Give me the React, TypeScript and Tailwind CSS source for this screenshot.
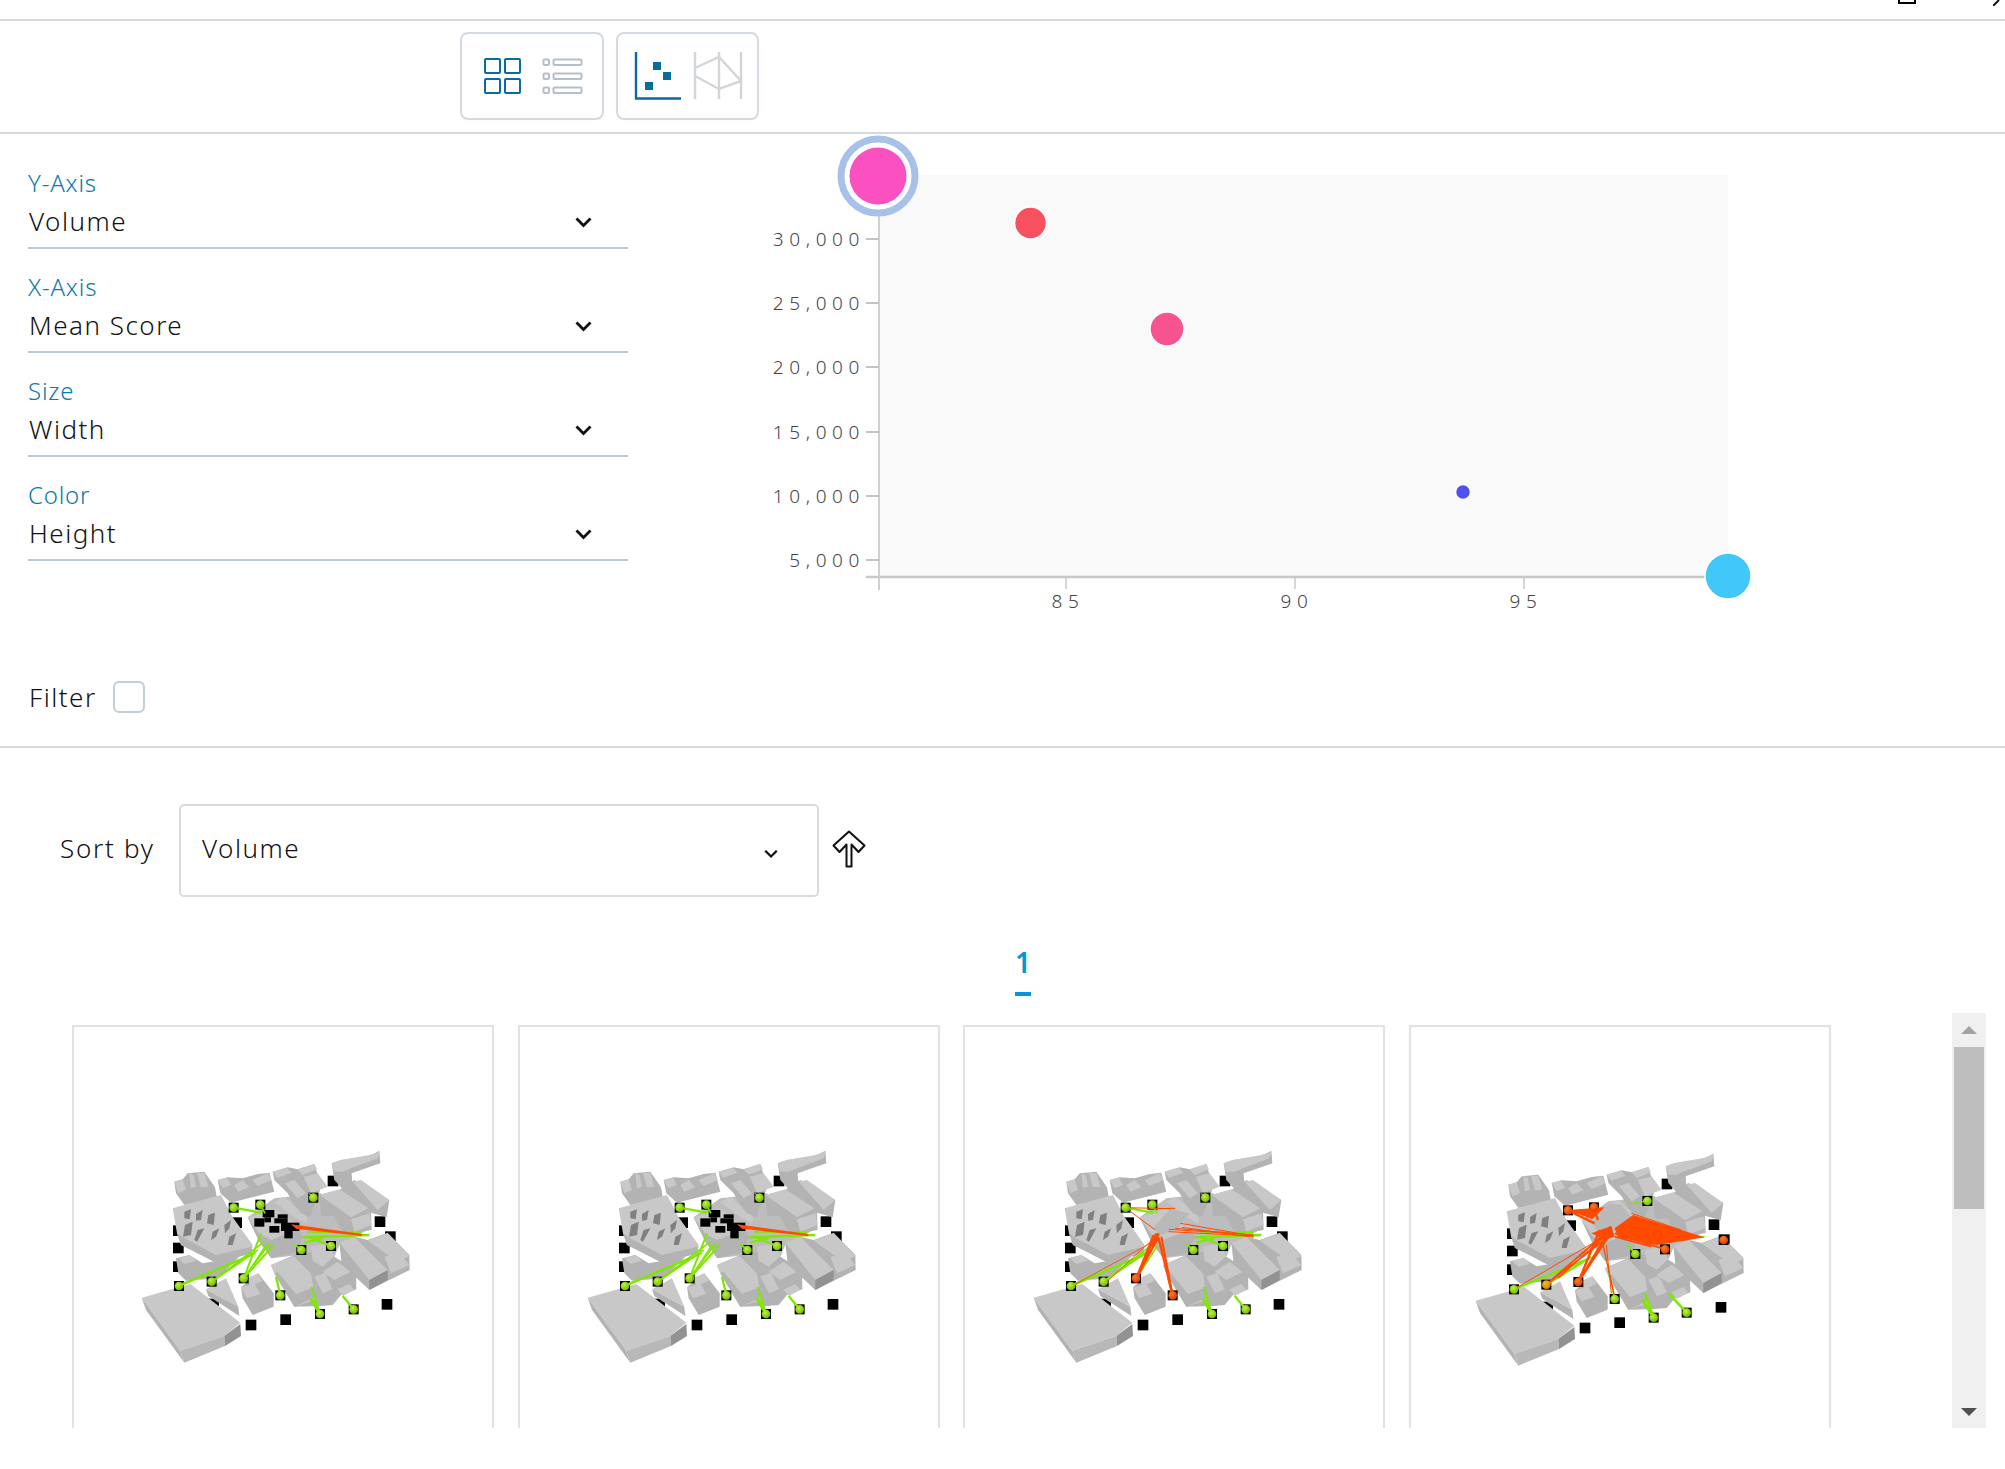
const Chevron = ({ small = false }: { small?: boolean }) => (
  <svg width={small ? 14 : 17} height={small ? 10 : 11} viewBox="0 0 17 11" fill="none">
    <path d="M1.5 1.5L8.5 8.5L15.5 1.5" stroke="#111" strokeWidth="2.8" />
  </svg>
);

const fields = [
  { label: "Y-Axis", value: "Volume" },
  { label: "X-Axis", value: "Mean Score" },
  { label: "Size", value: "Width" },
  { label: "Color", value: "Height" },
];

const Field = ({ label, value }: { label: string; value: string }) => (
  <div className="mb-[19px] w-[600px]">
    <div className="text-[24px] leading-[38px] tracking-[0.8px] font-light text-[#0f7aa6]">{label}</div>
    <div className="flex items-center justify-between border-b-2 border-[#bcc8d3] pb-[7px] pr-[36px] pl-[1px]">
      <span className="text-[26px] leading-[38px] tracking-[1.5px] font-light text-[#111]">{value}</span>
      <div className="pt-[3px]">
        <Chevron />
      </div>
    </div>
  </div>
);

const ChartChart = () => {
  const yTicks: [string, number][] = [
    ["30,000", 239],
    ["25,000", 303],
    ["20,000", 367],
    ["15,000", 432],
    ["10,000", 496],
    ["5,000", 560],
  ];
  const xTicks: [string, number][] = [
    ["85", 1065],
    ["90", 1294],
    ["95", 1523],
  ];
  return (
    <svg width="1377" height="613" viewBox="627 134 1377 613">
      <rect x="879" y="175" width="848" height="401" fill="#f9f9f9" />
      <line x1="878" y1="176" x2="878" y2="590" stroke="#d0d0d0" strokeWidth="2" />
      <line x1="865" y1="577" x2="1727" y2="577" stroke="#c8c8c8" strokeWidth="2.5" />
      {yTicks.map(([t, y]) => (
        <g key={t}>
          <line x1="865" y1={y} x2="878" y2={y} stroke="#c4c4c4" strokeWidth="2" />
          <text x="864" y={y + 7} textAnchor="end" fontFamily="Noto Sans" fontWeight="300" fontSize="19" letterSpacing="5.6" fill="#444">
            {t}
          </text>
        </g>
      ))}
      {xTicks.map(([t, x]) => (
        <g key={t}>
          <line x1={x} y1="577" x2={x} y2="589" stroke="#c8c8c8" strokeWidth="1.5" />
          <text x={x + 2} y="608" textAnchor="middle" fontFamily="Noto Sans" fontWeight="300" fontSize="19" letterSpacing="5.6" fill="#444">
            {t}
          </text>
        </g>
      ))}
      <circle cx="877" cy="176" r="37" fill="#fff" stroke="#a8c1e8" strokeWidth="7" />
      <circle cx="877" cy="176" r="28.5" fill="#fa50c0" />
      <circle cx="1029.5" cy="223" r="16" fill="#f75160" stroke="#fff" strokeWidth="1.5" />
      <circle cx="1166" cy="329" r="17" fill="#f7538f" stroke="#fff" strokeWidth="1.5" />
      <circle cx="1462" cy="492" r="7.5" fill="#5050ee" stroke="#fff" strokeWidth="1.5" />
      <circle cx="1727" cy="576" r="23" fill="#41c8f8" stroke="#fff" strokeWidth="1.5" />
    </svg>
  );
};

// top faces, then shaded faces, in the 3x crop's coordinates
const TOP = "#c8c8c8";
const SIDE = "#b3b3b3";
const DARK = "#929292";

const buildings: [string, string][] = [
  // underlay so the blocks read as one city
  ["460,205 600,190 740,300 655,345 640,380 560,372 450,385 415,335 380,262", "#bdbdbd"],
  // back row left
  ["160,155 185,148 200,130 250,125 282,172 288,205 190,225 165,190", SIDE],
  ["160,155 185,148 195,180 172,190", TOP],
  ["205,130 218,135 225,170 210,175", TOP],
  ["228,130 250,128 262,170 240,172", TOP],
  ["290,150 320,142 365,145 410,132 445,128 460,185 330,218 298,190", SIDE],
  ["290,150 318,143 330,165 305,175", TOP],
  ["395,150 440,130 452,150 410,168", TOP],
  ["340,165 365,150 385,172 352,185", TOP],
  // back row middle
  ["455,125 500,112 530,118 580,102 590,135 600,165 590,210 560,265 520,225 500,190 460,150", SIDE],
  ["455,125 498,114 512,128 468,143", TOP],
  ["530,118 580,102 588,118 545,135", TOP],
  ["548,140 590,130 620,170 570,190", TOP],
  ["492,160 520,150 555,190 530,205", TOP],
  // top right L
  ["632,100 660,90 745,78 775,62 778,100 692,130 695,180 665,178 640,150", SIDE],
  ["632,100 660,90 745,75 775,65 770,85 690,115 665,125 640,125", TOP],
  // right cluster
  ["595,195 655,180 700,150 805,210 797,262 750,248 752,300 680,312 600,255", SIDE],
  ["595,195 655,178 742,235 690,262", TOP],
  ["695,155 720,150 805,210 770,240", TOP],
  ["690,268 745,250 752,285 700,305", TOP],
  // behind the plaza, right
  ["585,258 640,258 662,305 655,345 600,340 555,345 535,290", "#bdbdbd"],
  // plaza centre
  ["380,262 460,235 530,285 545,320 530,365 452,385 415,335", SIDE],
  ["380,262 460,235 540,295 450,330 415,312", TOP],
  ["460,215 490,200 560,262 555,280 520,262", TOP],
  ["520,225 545,205 575,225 570,260 540,250", SIDE],
  // stadium
  ["155,235 300,195 335,262 395,345 392,370 285,398 225,365 180,345 168,310", TOP],
  ["168,310 180,345 285,398 392,370 392,350 285,375 190,325", SIDE],
  ["165,385 205,375 245,400 355,380 290,445 195,452 172,430", SIDE],
  ["172,385 205,375 225,392 190,402", TOP],
  // lower left plate
  ["62,503 208,462 358,578 310,618 178,662", TOP],
  ["62,503 178,662 190,698 75,540", SIDE],
  ["178,662 310,618 312,648 190,698", "#b8b8b8"],
  ["310,618 358,582 360,618 312,648", DARK],
  // triangle
  ["255,478 315,445 352,530", TOP],
  ["255,478 352,530 355,558 262,498", SIDE],
  // small block
  ["360,472 412,430 458,490 458,530 395,555 365,505", SIDE],
  ["376,445 412,430 425,452 390,468", TOP],
  ["360,472 400,462 418,492 378,505", TOP],
  // middle lower
  ["450,405 520,375 600,360 640,380 705,420 706,478 660,495 635,525 600,528 520,530 460,430", SIDE],
  ["450,405 518,378 570,430 578,480 582,510 520,530 460,430", TOP],
  ["460,430 520,530 585,500 582,470 525,492 470,425", SIDE],
  ["520,375 560,365 600,420 570,430", SIDE],
  ["570,350 620,340 640,378 605,410 575,392", TOP],
  ["605,425 650,395 690,425 640,450", TOP],
  ["580,440 612,428 635,478 606,490", TOP],
  ["650,478 685,462 700,480 665,498", TOP],
  // lower right
  ["655,338 700,320 740,330 800,308 865,375 866,420 805,450 745,480 662,402", SIDE],
  ["655,338 700,320 800,420 745,450", TOP],
  ["740,332 800,310 866,378 830,395", TOP],
  ["790,380 835,370 865,405 810,430", TOP],
  ["745,450 800,420 800,450 745,480", DARK],
];

const windows = [
  "190,245 210,238 206,268 190,265",
  "225,252 245,240 240,270 225,272",
  "262,255 282,248 278,285 258,280",
  "192,285 215,275 210,315 186,320",
  "230,300 250,295 228,335 220,330",
  "275,305 295,295 285,320 270,330",
  "310,285 330,270 325,295 312,310",
  "325,320 345,310 335,345 320,345",
];

const plainSquares: [number, number][] = [
  [798, 523], [494, 569], [390, 585], [278, 522], [777, 275], [592, 248], [636, 153],
  [172, 302], [172, 354], [172, 410], [347, 278], [808, 320],
];

const cluster: [number, number, number, number][] = [
  [400, 265, 30, 25], [425, 240, 35, 22], [460, 265, 40, 15], [480, 278, 55, 25],
  [445, 288, 30, 20], [490, 303, 25, 22], [470, 253, 30, 12], [430, 262, 20, 15],
];

type Sphere = [number, number, "g" | "r" | "o"];
type Edge = [number, number, number, number, number];

const base: Sphere[] = [
  [338, 233, "g"], [418, 224, "g"], [577, 203, "g"], [174, 468, "g"], [272, 455, "g"], [368, 445, "g"],
  [478, 496, "g"], [597, 552, "g"], [698, 538, "g"], [541, 360, "g"], [630, 348, "g"],
];

const greenEdges: Edge[] = [
  [338, 233, 420, 248, 7], [418, 224, 432, 250, 5],
  [174, 468, 390, 375, 7], [180, 462, 405, 370, 4], [272, 455, 395, 370, 6], [272, 455, 430, 335, 5], [290, 440, 410, 360, 5],
  [368, 445, 420, 310, 6], [368, 445, 445, 340, 6], [368, 445, 458, 345, 6], [380, 430, 435, 345, 5],
  [478, 496, 465, 440, 7], [597, 552, 572, 470, 6], [597, 552, 570, 505, 10], [698, 538, 665, 498, 7],
  [541, 360, 520, 342, 6], [630, 348, 560, 320, 7], [745, 315, 545, 322, 7], [720, 308, 560, 305, 6],
  [605, 325, 550, 338, 7], [577, 203, 565, 190, 4],
];

const scenes: {
  dx: number;
  dy: number;
  spheres: Sphere[];
  green: Edge[];
  red: Edge[];
  fills: string[];
  top?: string[];
  cluster: boolean;
}[] = [
  {
    dx: 0, dy: 0, spheres: base, green: greenEdges, cluster: true, fills: ["510,283 725,312 722,318 525,296"], red: [], top: [],
  },
  {
    dx: 0, dy: 0, spheres: base, green: greenEdges, cluster: true, fills: ["510,283 725,312 722,318 525,296"], red: [], top: [],
  },
  {
    dx: 3, dy: 0,
    spheres: base.map(([x, y, c]) =>
      x === 368 || x === 478 ? [x + 4, y, "r"] : [x + 3, y, c]
    ) as Sphere[],
    green: greenEdges.filter((e) => e[0] !== 368).map(([a, b, c, d, w]) => [a + 3, b, c + 3, d, w]) as Edge[],
    cluster: false,
    top: ["420,295 470,238 528,250 495,295 445,315"],
    fills: [],
    red: [
      [340, 233, 475, 236, 3], [340, 233, 430, 300, 3], [418, 236, 490, 235, 3], [725, 318, 505, 280, 3], [725, 318, 470, 305, 3],
      [725, 315, 490, 295, 3], [725, 322, 510, 292, 3], [690, 312, 470, 298, 3],
      [372, 445, 425, 315, 6], [372, 445, 440, 320, 7], [378, 440, 432, 310, 6], [482, 496, 440, 325, 7], [482, 496, 448, 320, 6],
      [290, 450, 420, 330, 2.5], [185, 465, 415, 340, 2.5], [420, 345, 440, 310, 9],
    ],
  },
  {
    dx: -9, dy: 9,
    spheres: [
      [330, 241, "r"], [408, 232, "r"], [568, 213, "g"], [168, 478, "g"], [265, 464, "o"], [361, 456, "r"],
      [470, 507, "g"], [587, 563, "g"], [686, 548, "g"], [532, 372, "g"], [621, 358, "r"], [797, 330, "r"],
    ],
    green: [
      [168, 478, 395, 385, 7], [265, 464, 400, 380, 7], [587, 563, 562, 490, 7], [587, 563, 555, 510, 10], [686, 548, 632, 490, 8],
      [532, 372, 510, 345, 6], [470, 507, 450, 420, 4], [740, 320, 530, 335, 5], [568, 213, 510, 222, 3],
    ],
    cluster: false,
    top: ["410,268 465,212 500,215 535,260 480,295 430,300"],
    fills: [
      "330,240 440,232 402,268",
      "740,322 525,255 470,295 480,322 595,345 680,332",
      "400,310 460,288 470,320 440,330",
    ],
    red: [
      [168, 478, 420, 330, 3], [265, 464, 430, 320, 6], [265, 464, 445, 325, 5], [361, 456, 425, 300, 7], [361, 456, 440, 325, 7],
      [361, 456, 455, 315, 6], [300, 445, 455, 305, 4], [470, 500, 435, 345, 4], [460, 490, 445, 345, 3], [621, 358, 470, 310, 6],
      [580, 350, 470, 320, 5], [330, 241, 410, 280, 7], [408, 232, 420, 270, 7], [400, 360, 460, 290, 6], [670, 300, 520, 250, 3],
    ],
  },
];

const sphereFill = { g: "url(#sg)", r: "url(#sr)", o: "url(#so)" };

const Scene = ({ index }: { index: number }) => {
  const s = scenes[index];
  return (
    <svg width="320" height="260" viewBox="0 0 960 780">
      <defs>
        <radialGradient id="sg" cx="0.4" cy="0.35" r="0.7">
          <stop offset="0" stopColor="#bdf23a" />
          <stop offset="1" stopColor="#6fb800" />
        </radialGradient>
        <radialGradient id="sr" cx="0.4" cy="0.35" r="0.7">
          <stop offset="0" stopColor="#ff7a2a" />
          <stop offset="1" stopColor="#d83a00" />
        </radialGradient>
        <radialGradient id="so" cx="0.4" cy="0.35" r="0.7">
          <stop offset="0" stopColor="#f2b62c" />
          <stop offset="1" stopColor="#c98600" />
        </radialGradient>
      </defs>
      <g transform={`translate(${s.dx} ${s.dy})`}>
        {plainSquares.map(([x, y]) => (
          <rect key={`${x}-${y}`} x={x - 16} y={y - 16} width="32" height="32" fill="#000" />
        ))}
        {buildings.map(([pts, fill], i) => (
          <polygon key={i} points={pts} fill={fill} />
        ))}
        {windows.map((pts) => (
          <polygon key={pts} points={pts} fill="#808080" />
        ))}
        {s.cluster && cluster.map(([x, y, w, h]) => <rect key={`${x}-${y}`} x={x} y={y} width={w} height={h} fill="#000" />)}
        {s.top?.map((pts) => (
          <polygon key={pts} points={pts} fill="#b9b9b9" />
        ))}
      </g>
      {s.spheres.map(([x, y]) => (
        <rect key={`${x}-${y}`} x={x - 15} y={y - 15} width="30" height="30" fill="#000" />
      ))}
      {s.green.map(([a, b, c, d, w], i) => (
        <line key={i} x1={a} y1={b} x2={c} y2={d} stroke="#7fe800" strokeWidth={w} />
      ))}
      {s.fills.map((pts) => (
        <polygon key={pts} points={pts} fill="#ff4a00" />
      ))}
      {s.red.map(([a, b, c, d, w], i) => (
        <line key={i} x1={a} y1={b} x2={c} y2={d} stroke="#ff4a00" strokeWidth={w} />
      ))}
      {s.spheres.map(([x, y, c]) => (
        <circle key={`${x}-${y}`} cx={x} cy={y} r="13" fill={sphereFill[c]} />
      ))}
    </svg>
  );
};

const App = () => {
  return (
    <div className="w-[2005px] h-[1469px] overflow-hidden bg-white font-['Noto_Sans',sans-serif]">
      <div className="h-[21px] border-b-2 border-[#d3dae2] flex justify-end items-start pr-0">
        <div className="w-[18px] h-[4px] border-2 border-t-0 border-black mr-[77px]"></div>
        <svg width="12" height="6" viewBox="0 0 12 6" className="mr-0">
          <path d="M0 6L6 0" stroke="#111" strokeWidth="2" />
        </svg>
      </div>

      {/* toolbar */}
      <div className="h-[113px] border-b-2 border-[#d3dae2] pt-[11px] pl-[460px] flex gap-[12px]">
        <div className="w-[144px] h-[88px] rounded-[8px] border-2 border-[#d3dae2]">
          <svg width="140" height="84" viewBox="462 34 140 84" fill="none">
            <g stroke="#0a6c9c" strokeWidth="2">
              <rect x="485" y="59" width="15" height="14" rx="1" />
              <rect x="505" y="59" width="15" height="14" rx="1" />
              <rect x="485" y="79" width="15" height="14" rx="1" />
              <rect x="505" y="79" width="15" height="14" rx="1" />
            </g>
            <g stroke="#b6bfc7" strokeWidth="2">
              <rect x="543.5" y="59.5" width="5.5" height="5.5" rx="1" />
              <rect x="553.5" y="59.5" width="28" height="5.5" rx="1" />
              <rect x="543.5" y="73.5" width="5.5" height="5.5" rx="1" />
              <rect x="553.5" y="73.5" width="28" height="5.5" rx="1" />
              <rect x="543.5" y="87.5" width="5.5" height="5.5" rx="1" />
              <rect x="553.5" y="87.5" width="28" height="5.5" rx="1" />
            </g>
          </svg>
        </div>
        <div className="w-[143px] h-[88px] rounded-[8px] border-2 border-[#d3dae2]">
          <svg width="139" height="84" viewBox="618 34 139 84" fill="none">
            <path d="M636 52V98.5H681" stroke="#0a6c9c" strokeWidth="2.4" />
            <rect x="653" y="62" width="8" height="8" fill="#0a6c9c" />
            <rect x="663" y="72" width="8" height="8" fill="#0a6c9c" />
            <rect x="645" y="82" width="8" height="8" fill="#0a6c9c" />
            <path d="M695 52V99M719 52V99M741 52V99M695 68L719 57L741 81L719 89L695 76" stroke="#d2d6db" strokeWidth="2.4" />
          </svg>
        </div>
      </div>

      {/* controls + chart */}
      <div className="h-[614px] border-b-2 border-[#d6dbe0] flex">
        <div className="w-[628px] pl-[28px] pt-[30px] shrink-0">
          {fields.map((f) => (
            <Field key={f.label} label={f.label} value={f.value} />
          ))}
          <div className="mt-[116px] pl-[1px] flex items-center h-[40px] gap-[16px]">
            <span className="text-[26px] tracking-[1.5px] font-light text-[#111]">Filter</span>
            <div className="w-[32px] h-[32px] rounded-[6px] border-2 border-[#c3ced8]"></div>
          </div>
        </div>
        <ChartChart />
      </div>

      {/* sort */}
      <div className="mt-[56px] pl-[60px] flex items-start">
        <span className="w-[119px] h-[93px] pt-[24px] text-[26px] leading-[40px] tracking-[1.7px] font-light text-[#111]">Sort by</span>
        <div className="w-[640px] h-[93px] rounded-[5px] border-2 border-[#d8dadd] pl-[21px] pr-[39px] pt-[22px] flex justify-between">
          <span className="text-[26px] leading-[40px] tracking-[1.5px] font-light text-[#111]">Volume</span>
          <div className="pt-[21px]">
            <Chevron small />
          </div>
        </div>
        <svg width="36" height="38" viewBox="0 0 36 38" fill="none" className="ml-[12px] mt-[26px]">
          <path d="M15.5 36.5V14.5L8.5 22L2.5 15.5L18 1.5L33.5 15.5L27.5 22L20.5 14.5V36.5Z" stroke="#111" strokeWidth="2" strokeLinejoin="round" />
        </svg>
      </div>

      {/* pagination */}
      <div className="mt-[43px] ml-[1015px] w-[16px] h-[56px] flex flex-col items-center">
        <span className="text-[28px] leading-[44px] font-semibold text-[#0696d7]">1</span>
        <div className="mt-[8px] w-[16px] h-[4px] bg-[#0696d7] shrink-0"></div>
      </div>

      {/* results */}
      <div className="mt-[17px] flex h-[415px]">
        <div className="pl-[72px] pt-[12px] w-[1952px] overflow-hidden">
          <div className="flex gap-[23.6px]">
            {[0, 1, 2, 3].map((i) => (
              <div key={i} className="w-[422px] h-[460px] shrink-0 border-2 border-[#e0e2e4] pl-[47px] pt-[103px]">
                <Scene index={i} />
              </div>
            ))}
          </div>
        </div>
        <div className="w-[34px] bg-[#f0f0f0] flex flex-col items-center px-[2px]">
          <div className="h-[34px] flex items-center justify-center shrink-0">
            <div className="w-0 h-0 border-x-[8px] border-x-transparent border-b-[8px] border-b-[#a3a3a3]"></div>
          </div>
          <div className="w-[30px] h-[162px] bg-[#bebebe] shrink-0"></div>
          <div className="flex-1"></div>
          <div className="h-[32px] flex items-center justify-center shrink-0">
            <div className="w-0 h-0 border-x-[8px] border-x-transparent border-t-[8px] border-t-[#505050]"></div>
          </div>
        </div>
      </div>
    </div>
  );
};

export default App;
